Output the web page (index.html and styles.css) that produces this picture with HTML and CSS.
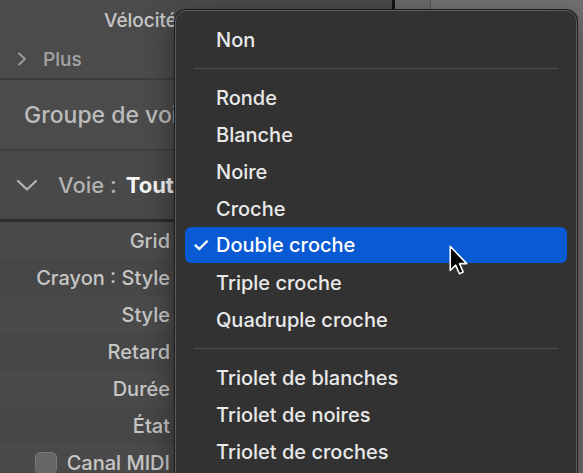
FILE: index.html
```html
<!DOCTYPE html>
<html lang="fr">
<head>
<meta charset="utf-8">
<link rel="stylesheet" href="styles.css">
</head>
<body>
<div class="app">
  <aside class="inspector">
    <div class="vel-row"><span class="vel-label">Vélocité</span></div>
    <div class="plus-row">
      <svg class="chev-right" width="10" height="14" viewBox="0 0 10 14"><path d="M2 1.5 L8 7 L2 12.5" fill="none" stroke="#9c9c9c" stroke-width="2" stroke-linecap="round" stroke-linejoin="round"/></svg>
      <span class="plus-label">Plus</span>
    </div>
    <div class="group-row">Groupe de voix</div>
    <div class="voie-row">
      <svg class="chev-down" width="22" height="12" viewBox="0 0 22 12"><path d="M2 2 L11 10.5 L20 2" fill="none" stroke="#b4b4b4" stroke-width="2.2" stroke-linecap="round" stroke-linejoin="round"/></svg>
      <span class="voie-label">Voie :</span><span class="voie-value">Toutes</span>
    </div>
    <div class="params">
      <div class="param"><div class="param-label">Grid</div></div>
      <div class="param"><div class="param-label">Crayon : Style</div></div>
      <div class="param"><div class="param-label">Style</div></div>
      <div class="param"><div class="param-label">Retard</div></div>
      <div class="param"><div class="param-label">Durée</div></div>
      <div class="param"><div class="param-label">État</div></div>
      <div class="param"><div class="param-label"><span class="check"></span>Canal MIDI</div></div>
    </div>
  </aside>
  <div class="split"></div>
  <section class="editor">
    <div class="ruler-col"></div>
    <div class="track-col"></div>
  </section>
</div>

<div class="menu">
  <div class="item"><span class="mark"></span>Non</div>
  <div class="sep"></div>
  <div class="item"><span class="mark"></span>Ronde</div>
  <div class="item"><span class="mark"></span>Blanche</div>
  <div class="item"><span class="mark"></span>Noire</div>
  <div class="item"><span class="mark"></span>Croche</div>
  <div class="item selected"><span class="mark">✓</span>Double croche</div>
  <div class="item"><span class="mark"></span>Triple croche</div>
  <div class="item"><span class="mark"></span>Quadruple croche</div>
  <div class="sep"></div>
  <div class="item"><span class="mark"></span>Triolet de blanches</div>
  <div class="item"><span class="mark"></span>Triolet de noires</div>
  <div class="item"><span class="mark"></span>Triolet de croches</div>
</div>

<svg class="cursor" width="22" height="32" viewBox="0 0 20 29">
  <path d="M2 2 L2 24 L7 19.2 L10.4 27 L13.8 25.5 L10.5 17.8 L17 17.8 Z" fill="#000" stroke="#fff" stroke-width="1.4" stroke-linejoin="round"/>
</svg>
</body>
</html>
```

FILE: styles.css
```css
html, body {
  margin: 0;
  padding: 0;
}
body {
  width: 583px;
  height: 473px;
  overflow: hidden;
  position: relative;
  background: #6d6d6d;
  font-family: "Inter", "Noto Sans", "Liberation Sans", sans-serif;
}
.app {
  display: flex;
  height: 473px;
  overflow: hidden;
}
.inspector {
  width: 392px;
  flex: none;
  background: #4b4b4b;
  display: flex;
  flex-direction: column;
}
.inspector > * {
  flex: none;
}
.split {
  width: 3px;
  flex: none;
  background: #121212;
}
.editor {
  flex: 1;
  display: flex;
}
.ruler-col {
  width: 35px;
  background: #6b6b6b;
  border-right: 1px solid #585858;
}
.track-col {
  flex: 1;
  background: #717171;
}

.vel-row {
  height: 40px;
  display: flex;
  align-items: center;
  justify-content: flex-end;
  width: 177px;
  box-sizing: border-box;
}
.vel-label {
  color: #c6c6c6;
  font-size: 19px;
  font-weight: 500;
}
.plus-row {
  height: 38px;
  display: flex;
  align-items: center;
  padding-left: 17px;
  gap: 16px;
  border-bottom: 2px solid #3d3d3d;
}
.plus-label {
  color: #a4a4a4;
  font-size: 19px;
  font-weight: 500;
}
.group-row {
  height: 69px;
  display: flex;
  align-items: center;
  padding-left: 24px;
  color: #bcbcbc;
  font-size: 23px;
  font-weight: 500;
  border-bottom: 2px solid #3f3f3f;
  white-space: nowrap;
}
.voie-row {
  height: 68px;
  display: flex;
  align-items: center;
  padding-left: 16px;
  border-bottom: 3px solid #2c2c2c;
  background: #494949;
  font-size: 22px;
  font-weight: 500;
  white-space: nowrap;
}
.chev-down {
  margin-right: 20px;
}
.voie-label {
  color: #b2b2b2;
  margin-right: 9px;
}
.voie-value {
  color: #f4f4f4;
  font-weight: 700;
}
.params {
  display: flex;
  flex-direction: column;
}
.param {
  height: 37px;
  flex: none;
  display: flex;
  align-items: center;
  background: #4a4a4a;
}
.param:nth-child(even) {
  background: #474747;
}
.param-label {
  width: 170px;
  display: flex;
  align-items: center;
  justify-content: flex-end;
  color: #c6c6c6;
  font-size: 20px;
  font-weight: 500;
  white-space: nowrap;
}
.check {
  width: 22px;
  height: 22px;
  box-sizing: border-box;
  border-radius: 5px;
  background: #666666;
  border: 1px solid #787878;
  margin-right: 10px;
}

.menu {
  position: absolute;
  left: 175px;
  top: 10px;
  width: 402px;
  height: 490px;
  box-sizing: border-box;
  padding: 10px 9px;
  background: #323232;
  border: 1px solid #5d5d5d;
  border-radius: 11px;
  box-shadow: 0 0 0 1px #1b1b1b, 0 10px 30px rgba(0, 0, 0, 0.45);
  display: flex;
  flex-direction: column;
}
.item {
  height: 37px;
  flex: none;
  display: flex;
  align-items: center;
  padding-left: 7px;
  color: #e9e9e9;
  font-size: 20px;
  font-weight: 500;
  border-radius: 6px;
  white-space: nowrap;
}
.mark {
  width: 24px;
  flex: none;
  font-size: 20px;
  font-weight: 500;
}
.item.selected {
  background: #0a5ad4;
  color: #ffffff;
  height: 36px;
  margin-bottom: 1px;
}
.sep {
  height: 21px;
  flex: none;
  display: flex;
  align-items: center;
  margin: 0 9px;
}
.sep::before {
  content: "";
  flex: 1;
  height: 1px;
  background: #505050;
}
.cursor {
  position: absolute;
  left: 448px;
  top: 244px;
}
```
